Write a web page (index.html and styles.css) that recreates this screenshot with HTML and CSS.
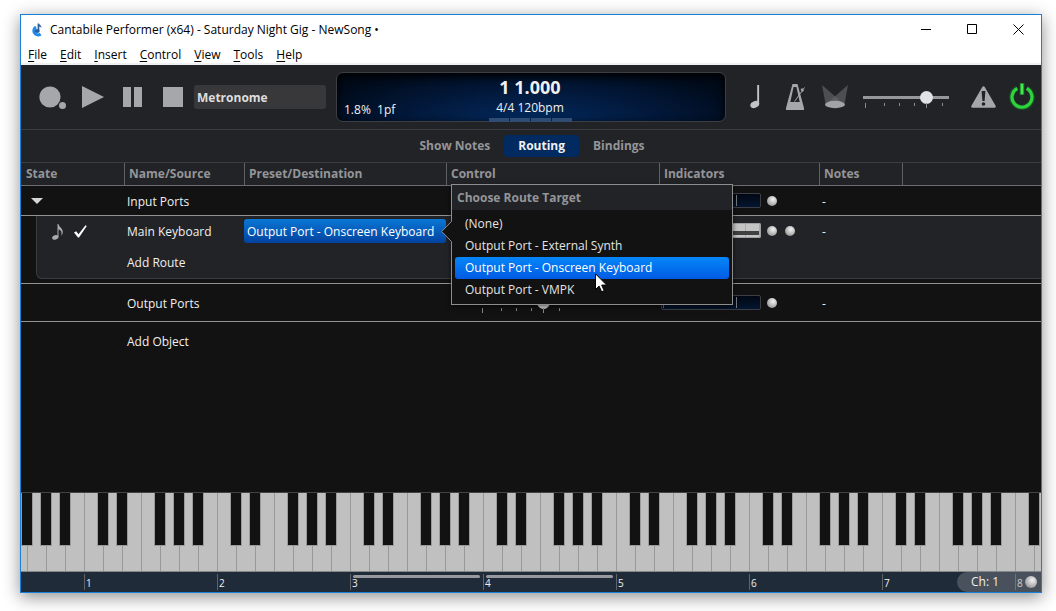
FILE: index.html
```html
<!DOCTYPE html>
<html lang="en">
<head>
<meta charset="utf-8">
<title>Cantabile Performer</title>
<link rel="stylesheet" href="styles.css">
</head>
<body>
<main class="window">
  <header class="titlebar">
    <svg class="logo" width="12" height="14" viewBox="0 0 12 14" aria-hidden="true">
      <path d="M9.6 11A4.200 4.200 0 1 1 5 4" fill="none" stroke="#1e8bf0" stroke-width="3"/>
      <ellipse cx="6.200" cy="8" rx="2.500" ry="2" fill="#2f5f9a"/>
      <path d="M6.600 0.500h1.500c0.200 1.600 2.800 1.800 2.300 4.600c-0.600-1-1.300-1.400-2.100-1.500v4.600H6.600z" fill="#2f5f9a"/>
    </svg>
    <h1 class="title">Cantabile Performer (x64) - Saturday Night Gig - NewSong •</h1>
    <div class="window-buttons">
      <button class="window-button" aria-label="Minimize"><svg width="11" height="11" viewBox="0 0 11 11"><path d="M0 5.5h10" stroke="#000"/></svg></button>
      <button class="window-button" aria-label="Maximize"><svg width="11" height="11" viewBox="0 0 11 11"><path d="M.5 .5h9v9h-9z" fill="none" stroke="#000"/></svg></button>
      <button class="window-button" aria-label="Close"><svg width="11" height="11" viewBox="0 0 11 11"><path d="M.5 .5l10 10M10.500 .5l-10 10" stroke="#000"/></svg></button>
    </div>
  </header>

  <nav class="menubar" aria-label="Main menu">
    <button class="menu"><u>F</u>ile</button>
    <button class="menu"><u>E</u>dit</button>
    <button class="menu"><u>I</u>nsert</button>
    <button class="menu"><u>C</u>ontrol</button>
    <button class="menu"><u>V</u>iew</button>
    <button class="menu"><u>T</u>ools</button>
    <button class="menu"><u>H</u>elp</button>
  </nav>

  <section class="toolbar" aria-label="Transport">
    <div class="transport">
      <button class="tool" aria-label="Record"><svg width="28" height="24" viewBox="0 0 28 24" fill="#a6a7aa"><circle cx="11" cy="12" r="10.600"/><circle cx="23.500" cy="20.500" r="3.500"/></svg></button>
      <button class="tool" aria-label="Play"><svg width="22" height="22" viewBox="0 0 22 22" fill="#a6a7aa"><path d="M0 0l22 11l-22 11z"/></svg></button>
      <button class="tool" aria-label="Pause"><svg width="19" height="20" viewBox="0 0 19 20" fill="#a6a7aa"><path d="M0 0h8v20h-8zM11 0h8v20h-8z"/></svg></button>
      <button class="tool" aria-label="Stop"><svg width="20" height="20" viewBox="0 0 20 20" fill="#a6a7aa"><path d="M0 0h20v20h-20z"/></svg></button>
      <button class="source">Metronome</button>
    </div>

    <div class="display">
      <span class="load">1.8%&nbsp; 1pf</span>
      <div class="clock">
        <strong class="position">1 1.000</strong>
        <span class="tempo">4/4 120bpm</span>
        <div class="beats"><i></i><i></i><i></i><i></i></div>
      </div>
    </div>

    <div class="tools">
      <button class="tool" aria-label="Note"><svg width="10" height="24" viewBox="0 0 10 24" fill="#c4c4c4"><path d="M7.200 0h1.900v18.500h-1.900z"/><ellipse cx="4.800" cy="19.500" rx="4.600" ry="3.300" transform="rotate(-22 4.800 19.500)"/></svg></button>
      <button class="tool" aria-label="Metronome"><svg width="20" height="26" viewBox="0 0 20 26"><path fill="#a6a7aa" fill-rule="evenodd" d="M6.500 0h5l6.500 24v2H0v-2zM7.600 3L4.300 18h9.400L10.400 3z"/><path d="M8.500 17.500L18.500 3.500" stroke="#a6a7aa"/><path d="M14.500 5l2-.7l1.500 2.700l-2 .8z" fill="#a6a7aa"/></svg></button>
      <button class="tool" aria-label="Lights"><svg width="28" height="24" viewBox="0 0 28 24"><path d="M1 0l22 19H4.500z" fill="#666" opacity=".65"/><path d="M27 0L5 19h18.500z" fill="#666" opacity=".65"/><ellipse cx="14" cy="19.500" rx="10" ry="3.700" fill="#a2a3a6"/></svg></button>
      <div class="fader">
        <input type="range" min="0" max="100" value="78" aria-label="Master gain">
        <svg class="ticks" width="86" height="6" viewBox="0 0 86 6"><path d="M2.500 0v5M21.500 0v3M36.500 0v3M51.500 0v3M63.500 0v5M79.500 0v3" stroke="#88898c"/></svg>
      </div>
      <button class="tool warning" aria-label="Alerts"><svg width="25" height="22" viewBox="0 0 25 22"><path d="M12.500 1.500L23.500 20.500h-22z" fill="#a6a7aa" stroke="#a6a7aa" stroke-width="2.500" stroke-linejoin="round"/><path d="M10.600 5h3.800l-.8 10h-2.200z" fill="#222327"/><circle cx="12.500" cy="18" r="1.800" fill="#222327"/></svg></button>
      <button class="tool power" aria-label="Power">
        <svg width="28" height="30" viewBox="0 0 28 30" fill="none"><path d="M9 6.200A10.300 10.300 0 1 0 19 6.200M14 1v12" stroke="#0f7a26" stroke-width="5" opacity=".55"/><path d="M9.300 6.400A10 10 0 1 0 18.700 6.400M14 1.500v11" stroke="#2fd43c" stroke-width="3.200"/><path d="M14 2v10" stroke="#4cf055" stroke-width="1.500"/></svg>
      </button>
    </div>
  </section>

  <nav class="tabs" aria-label="View">
    <button class="tab">Show Notes</button>
    <button class="tab active">Routing</button>
    <button class="tab">Bindings</button>
  </nav>

  <section class="workspace">
    <table class="routes">
      <colgroup><col class="c-state"><col class="c-name"><col class="c-dest"><col class="c-control"><col class="c-indicators"><col class="c-notes"><col></colgroup>
      <thead>
        <tr><th>State</th><th>Name/Source</th><th>Preset/Destination</th><th>Control</th><th>Indicators</th><th>Notes</th><th></th></tr>
      </thead>
      <tbody>
        <tr class="port">
          <td><button class="expander" aria-label="Collapse"><svg width="12" height="6" viewBox="0 0 12 6"><path d="M0 0h12l-6 6z" fill="#d6d6d6"/></svg></button></td>
          <td class="label">Input Ports</td><td></td><td></td>
          <td><div class="indicators"><span class="meter"></span><span class="led"></span></div></td>
          <td class="label">-</td><td></td>
        </tr>
      </tbody>
      <tbody class="group">
        <tr class="route">
          <td><div class="states">
            <svg width="12" height="16" viewBox="0 0 12 16"><path d="M5.500 0h1c.3 3.200 4.600 4.400 4.300 8.200c-.1 1.400-.7 2.500-1.700 3.600c.7-2.600 1-5-2.600-6.600v8h-1z" fill="#aaa"/><ellipse cx="3.300" cy="13.400" rx="3.200" ry="2.200" transform="rotate(-18 3.300 13.400)" fill="#aaa"/></svg>
            <svg width="13" height="13" viewBox="0 0 13 13"><path d="M0 7.500l2.200-1.200l2.300 3L11.500 .3l1.300 .8L5 12.500H4z" fill="#fff"/></svg>
          </div></td>
          <td>Main Keyboard</td>
          <td class="dest-cell">
            <button class="dest" aria-haspopup="listbox">Output Port - Onscreen Keyboard</button>
            <div class="popup">
              <svg class="pointer" width="11" height="21" viewBox="0 0 11 21"><path d="M11 0L.7 10.500L11 21z" fill="#121212"/><path d="M10.500 .5L.7 10.500l9.800 10" fill="none" stroke="#8d8d8d"/></svg>
              <h2 class="popup-title">Choose Route Target</h2>
              <div class="options" role="listbox" aria-label="Choose Route Target">
                <button class="option" role="option">(None)</button>
                <button class="option" role="option">Output Port - External Synth</button>
                <button class="option selected" role="option" aria-selected="true">Output Port - Onscreen Keyboard</button>
                <button class="option" role="option">Output Port - VMPK</button>
              </div>
              <svg class="cursor" width="13" height="20" viewBox="0 0 13 20"><path d="M.5 .8v15.700l3.600-3.400l2.500 5.700l2.600-1.100l-2.500-5.600h5z" fill="#fff" stroke="#000"/></svg>
            </div>
          </td>
          <td></td>
          <td class="indicator-cell"><div class="indicators"><span class="mini-keys"></span><span class="led"></span><span class="led"></span></div></td>
          <td>-</td><td></td>
        </tr>
        <tr class="add-route"><td></td><td>Add Route</td><td></td><td></td><td></td><td></td><td></td></tr>
      </tbody>
      <tbody>
        <tr class="output">
          <td></td><td class="label">Output Ports</td><td></td>
          <td><div class="fader row-fader">
            <input type="range" min="0" max="100" value="78" aria-label="Output gain">
            <svg class="ticks" width="86" height="6" viewBox="0 0 86 6"><path d="M2.500 0v5M21.500 0v3M36.500 0v3M51.500 0v3M63.500 0v5M79.500 0v3" stroke="#88898c"/></svg>
          </div></td>
          <td><div class="indicators"><span class="meter live"></span><span class="led"></span></div></td>
          <td class="label">-</td><td></td>
        </tr>
        <tr class="add-object"><td></td><td>Add Object</td><td></td><td></td><td></td><td></td><td></td></tr>
      </tbody>
    </table>
  </section>

  <footer class="piano">
    <svg class="keys" width="100%" height="79" aria-label="Keyboard">
      <defs>
        <pattern id="octave" x="63" y="0" width="133" height="79" patternUnits="userSpaceOnUse">
          <path fill="#c0c0c0" d="M0 0h133v79H0z"/>
          <path stroke="#979a98" d="M.5 0v79M19.500 0v79M38.500 0v79M57.500 0v79M76.500 0v79M95.500 0v79M114.500 0v79"/>
          <path fill="#9a9c9a" d="M13 0h12v53H13zM32 0h12v53H32zM70 0h12v53H70zM89 0h12v53H89zM108 0h12v53h-12z"/>
          <path fill="#121212" d="M14 0h10v52H14zM33 0h10v52H33zM71 0h10v52H71zM90 0h10v52H90zM109 0h10v52h-10z"/>
          <path stroke="#858887" d="M0 78.500h133"/>
        </pattern>
      </defs>
      <rect width="100%" height="79" fill="url(#octave)"/>
    </svg>
    <div class="ruler">
      <span class="octave">1</span><span class="octave">2</span><span class="octave range">3</span><span class="octave range">4</span><span class="octave">5</span><span class="octave">6</span><span class="octave">7</span><span class="octave">8</span>
      <button class="channel">Ch: 1 <span class="led"></span></button>
    </div>
  </footer>
</main>
</body>
</html>
```
FILE: styles.css
```css
* { box-sizing: border-box; }

body {
  margin: 0;
  min-height: 100vh;
  padding: 14px 14px 18px 20px;
  display: flex;
  background: #fff;
  color: #f0f0f0;
  font: 12px/16px "Open Sans", "Noto Sans", sans-serif;
}

button {
  margin: 0;
  padding: 0;
  border: 0;
  background: none;
  color: inherit;
  font: inherit;
}

svg { display: block; }

.window {
  flex: 1;
  min-width: 0;
  display: flex;
  flex-direction: column;
  border: 1px solid #1a7fd6;
  background: #121212;
  box-shadow: 0 4px 16px rgba(0, 0, 0, .45);
}

/* Title and menus */
.titlebar {
  display: flex;
  align-items: center;
  height: 29px;
  padding-left: 10px;
  gap: 7px;
  background: #fff;
  color: #000;
}

.title {
  flex: 1;
  margin: 0;
  font-size: 12px;
  font-weight: 400;
}

.window-buttons { display: flex; }

.window-button {
  width: 46px;
  height: 29px;
  display: grid;
  place-items: center;
}

.menubar {
  display: flex;
  gap: 13px;
  height: 21px;
  padding: 3px 0 0 7px;
  border-bottom: 2px solid #f0f0f0;
  background: #fff;
  color: #000;
}

.menu u { text-underline-offset: 2px; }

/* Transport */
.toolbar {
  display: grid;
  grid-template-columns: 1fr 390px 1fr;
  align-items: center;
  height: 65px;
  border-bottom: 1px solid #3c3d40;
  background: #222327;
}

.transport {
  display: flex;
  align-items: center;
  gap: 15px;
  padding: 0 10px 0 18px;
}

.transport .tool:nth-child(3) { margin-left: 4px; }
.transport .tool:nth-child(4) { margin-left: 6px; }

.source {
  flex: 1;
  height: 24px;
  margin-left: -4px;
  padding: 1px 3px 0;
  border-radius: 3px;
  background: #38383a;
  color: #dedede;
  font-weight: 700;
  text-align: left;
}

.display {
  display: grid;
  grid-template-columns: 1fr auto 1fr;
  height: 50px;
  border: 1px solid #3d3e42;
  border-radius: 7px;
  background: radial-gradient(ellipse 60% 120% at 50% 100%, #032a5e, #02183a 55%, #000a18 100%);
  box-shadow: inset 0 3px 8px #000;
}

.load {
  align-self: end;
  padding: 0 0 4px 7px;
}

.clock {
  display: flex;
  flex-direction: column;
  align-items: center;
  padding: 3px 2px 0 0;
}

.position {
  font-size: 18px;
  line-height: 22px;
}

.tempo { line-height: 20px; }

.beats {
  display: flex;
  gap: 1px;
}

.beats i {
  width: 20px;
  height: 4px;
  background: #2f4d74;
}

.tools {
  display: flex;
  justify-content: flex-end;
  align-items: center;
  padding-right: 5px;
  gap: 15px;
}

.tools .tool:first-child { margin-right: 11px; }
.tools .fader { margin-left: -1px; }
.tools .warning { margin-left: 7px; }
.tools .power { margin-left: -3px; }

.fader {
  width: 86px;
  display: grid;
  padding-top: 5px;
}

.fader input {
  appearance: none;
  width: 100%;
  height: 13px;
  margin: 0;
  background: linear-gradient(#97979b, #97979b) center / 100% 3px no-repeat;
}

.fader input::-webkit-slider-thumb {
  appearance: none;
  width: 13px;
  height: 13px;
  border-radius: 50%;
  background: #e2e2e6;
}

.ticks { margin-top: -1px; }

.row-fader { margin-left: 31px; }

/* Tabs */
.tabs {
  display: flex;
  justify-content: center;
  align-items: center;
  height: 33px;
  padding-left: 2px;
  border-bottom: 1px solid #3c3d40;
  background: #222327;
}

.tab {
  height: 22px;
  padding: 0 14px;
  border-radius: 4px;
  color: #949598;
  font-weight: 700;
}

.tab.active {
  background: #002a60;
  color: #f0f0f0;
}

/* Routing table */
.workspace { flex: 1; }

.routes {
  width: 100%;
  table-layout: fixed;
  border-spacing: 0;
}

.c-state { width: 103px; }
.c-name { width: 120px; }
.c-dest { width: 202px; }
.c-control { width: 213px; }
.c-indicators { width: 160px; }
.c-notes { width: 83px; }

.routes th {
  height: 23px;
  padding: 0 4px;
  border-left: 1px solid #606164;
  border-bottom: 1px solid #6c6d70;
  background: #222327;
  color: #949598;
  text-align: left;
}

.routes th:first-child { border-left: 0; padding-left: 5px; }

.routes td { padding: 0 3px; }

.routes .label { padding-top: 2px; }

.port td {
  height: 30px;
  border-bottom: 1px solid #929292;
}

.expander { margin-left: 7px; display: block; }

.group {
  position: relative;
  z-index: 1;
}

.group::before {
  content: "";
  position: absolute;
  z-index: -1;
  inset: 0 0 5px 15px;
  border: 1px solid #3a3b3e;
  border-width: 0 0 1px 1px;
  border-bottom-left-radius: 6px;
  background: #222327;
}

.route td { height: 31px; }

.states {
  display: flex;
  align-items: center;
  gap: 10px;
  padding-left: 28px;
}

.routes .dest-cell {
  position: relative;
  padding: 0 0 1px;
}

.routes .indicator-cell { padding-bottom: 2px; }

.dest {
  display: block;
  width: 100%;
  height: 24px;
  padding: 2px 3px 0;
  border-radius: 3px;
  background: linear-gradient(#0a77d5, #0242a0);
  color: #fff;
  text-align: left;
  white-space: nowrap;
}

.add-route td {
  height: 37px;
  padding-bottom: 5px;
  border-bottom: 1px solid #929292;
}

.output td {
  height: 38px;
  border-bottom: 1px solid #929292;
}

.add-object td { height: 40px; }

.indicators {
  display: flex;
  align-items: center;
  gap: 8px;
}

.routes .indicators { margin-left: -1px; }

.meter {
  width: 100px;
  height: 15px;
  margin-right: -2px;
  border: 1px solid #3e3f44;
  border-radius: 2px;
  background:
    linear-gradient(#77797d, #77797d) 74px 1px / 1px 11px no-repeat,
    linear-gradient(#010813, #03162f);
}

.meter.live {
  background:
    linear-gradient(#c85a10, #c85a10) 1px 1px / 1px 11px no-repeat,
    linear-gradient(#77797d, #77797d) 74px 1px / 1px 11px no-repeat,
    linear-gradient(#010813, #03162f);
}

.mini-keys {
  width: 100px;
  height: 15px;
  margin-right: -2px;
  border: 1px solid #a0a0a0;
  border-radius: 1px;
  background:
    linear-gradient(#404040, #404040) 0 7px / 97px 4px no-repeat,
    repeating-linear-gradient(90deg, #c4c4c4 0 13px, #aaa 13px 14px);
}

.led {
  width: 10px;
  height: 10px;
  border-radius: 50%;
  background: radial-gradient(circle at 60% 35%, #f2f2f2, #b8b8b8 50%, #777);
}

/* Route target popup */
.popup {
  position: absolute;
  z-index: 2;
  top: -32px;
  left: 207px;
  width: 282px;
  border: 1px solid #8d8d8d;
  background: #121212;
  box-shadow: 0 2px 5px rgba(0, 0, 0, .6);
}

.popup-title {
  margin: 0;
  padding: 0 5px;
  background: #222327;
  color: #949598;
  font-size: 12px;
  line-height: 25px;
}

.options {
  display: grid;
  padding: 3px;
}

.option {
  height: 22px;
  padding: 0 10px;
  border-radius: 3px;
  color: #e4e4e4;
  text-align: left;
}

.option.selected {
  background: linear-gradient(#0586f8, #005be4);
  color: #fff;
}

.pointer {
  position: absolute;
  top: 36px;
  left: -11px;
}

.cursor {
  position: absolute;
  top: 88px;
  left: 143px;
}

/* Piano */
.piano { border-top: 1px solid #424345; }

.ruler {
  position: relative;
  display: flex;
  height: 20px;
  padding-left: 63px;
  overflow: hidden;
  background: #202b39;
}

.octave {
  position: relative;
  flex: 0 0 133px;
  height: 16px;
  margin-top: 2px;
  padding-left: 1px;
  border-left: 1px solid #606468;
  font-size: 10px;
  line-height: 19px;
}

.octave.range::after {
  content: "";
  position: absolute;
  top: 1px;
  left: 2px;
  right: 3px;
  height: 3px;
  border-radius: 2px;
  background: #97999e;
}

.channel {
  position: absolute;
  top: 0;
  right: 0;
  width: 84px;
  height: 20px;
  display: flex;
  align-items: center;
  justify-content: space-between;
  padding: 0 4px 0 14px;
  border-radius: 10px 0 0 10px;
  background: rgba(136, 140, 146, .4);
}

.channel .led { width: 12px; height: 12px; }
```
